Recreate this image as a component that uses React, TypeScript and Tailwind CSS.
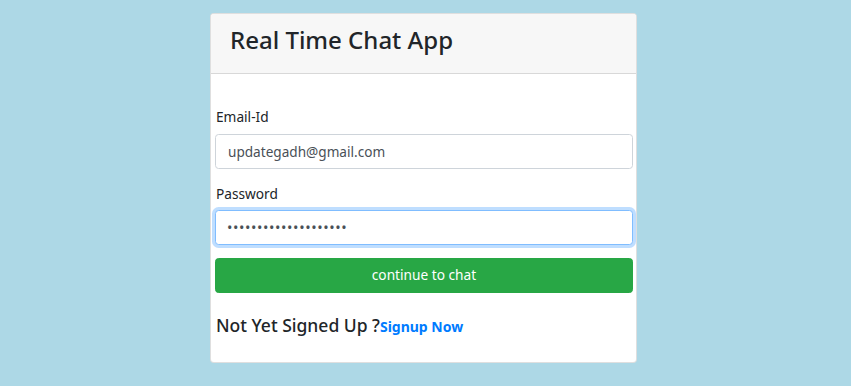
export default function App() {
  return (
    <div className="min-h-screen bg-[#add8e6] pt-[13px] font-['Noto_Sans',sans-serif] text-[#212529]">
      <div className="ml-[210px] w-[427px] overflow-hidden rounded-[4px] border border-black/[.125] bg-white">
        <div className="h-[60px] border-b border-black/[.125] bg-[#f7f7f7] px-[19px] pt-[11px]">
          <h3 className="text-[24px] font-medium leading-[30px]">Real Time Chat App</h3>
        </div>

        <form className="pl-[4px] pr-[3px] pt-[32px] pb-[24px]" onSubmit={(e) => e.preventDefault()}>
          <div className="mb-[14px]">
            <label className="mb-[6px] block pl-[1px] text-[13.7px] leading-[21.6px]">Email-Id</label>
            <input
              type="email"
              defaultValue="updategadh@gmail.com"
              className="block h-[35px] w-full rounded-[3.6px] border border-[#ced4da] bg-white px-[12px] text-[13.6px] text-[#495057] outline-none"
            />
          </div>

          <div className="mb-[13px]">
            <label className="mb-[6px] block pl-[1px] text-[13.7px] leading-[21.6px]">Password</label>
            <input
              type="password"
              defaultValue="updategadh1234567890"
              className="block h-[35px] w-full rounded-[3.6px] border border-[#80bdff] bg-white px-[11px] text-[14.4px] tracking-[0.6px] text-[#495057] shadow-[0_0_0_3px_rgba(0,123,255,.25)] outline-none"
            />
          </div>

          <button
            type="submit"
            className="block h-[35px] w-full rounded-[3.6px] border border-[#28a745] bg-[#28a745] text-[13.7px] text-white"
          >
            continue to chat
          </button>

          <h5 className="mt-[22px] pl-[1px] text-[17.5px] font-medium leading-[21.6px]">
            Not Yet Signed Up ?
            <a href="#" className="text-[14px] font-bold text-[#007bff]">
              Signup Now
            </a>
          </h5>
        </form>
      </div>
    </div>
  )
}
